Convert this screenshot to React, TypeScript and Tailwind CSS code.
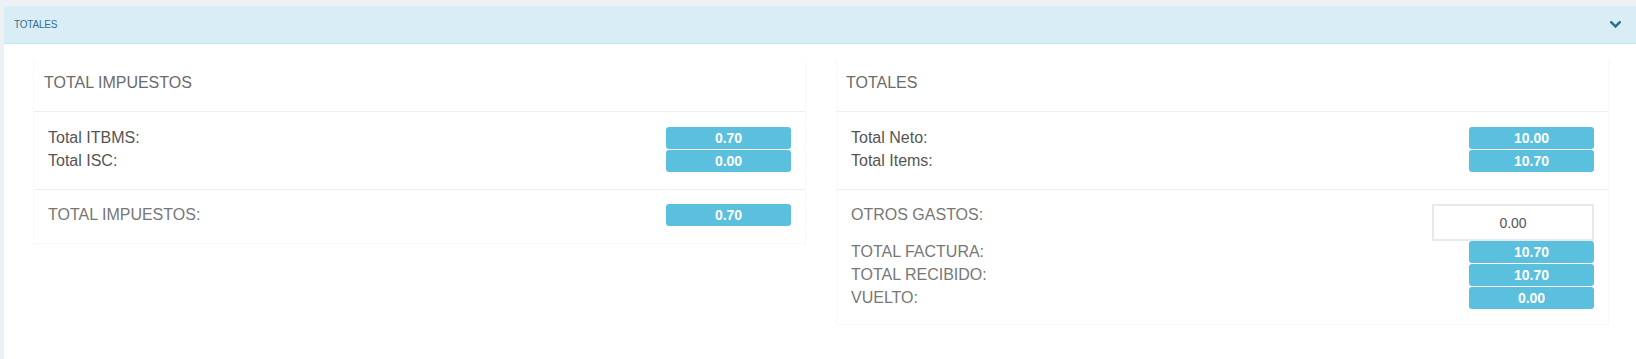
import React from 'react'

type Row = { label: string; value: string }

const impuestos: Row[] = [
  { label: 'Total ITBMS:', value: '0.70' },
  { label: 'Total ISC:', value: '0.00' },
]

const totales: Row[] = [
  { label: 'Total Neto:', value: '10.00' },
  { label: 'Total Items:', value: '10.70' },
]

const cierre: Row[] = [
  { label: 'TOTAL FACTURA:', value: '10.70' },
  { label: 'TOTAL RECIBIDO:', value: '10.70' },
  { label: 'VUELTO:', value: '0.00' },
]

function Badge({ value }: { value: string }) {
  return (
    <span className="w-[125px] h-[22px] rounded-[3px] bg-[#5bc0de] text-white text-[14px] font-bold leading-[22px] text-center">
      {value}
    </span>
  )
}

function ValueRow({ label, value, color = 'text-[#555]' }: Row & { color?: string }) {
  return (
    <div className="flex items-start justify-between h-[23px]">
      <span className={`text-[16px] leading-[22px] ${color}`}>{label}</span>
      <Badge value={value} />
    </div>
  )
}

function CardHeading({ title, pl }: { title: string; pl: string }) {
  return (
    <div className={`h-[51px] border-b border-[#eeeeee] pt-[11px] ${pl} text-[16px] leading-[22px] text-[#6b6b6b]`}>
      {title}
    </div>
  )
}

function Chevron() {
  return (
    <svg width="11" height="8" viewBox="0 0 11 8" className="block">
      <path d="M1.3 1.3 L5.5 5.5 L9.7 1.3" fill="none" stroke="#31708f" strokeWidth="2.6" strokeLinecap="square" />
    </svg>
  )
}

export default function App() {
  return (
    <div className="min-h-screen bg-[#eef1f3] pt-[6px] pl-[4px]" style={{ fontFamily: '"Liberation Sans", Arial, sans-serif' }}>
      <div className="bg-white min-h-[353px]">
        <div className="h-[38px] bg-[#d9edf7] border-b border-[#bce8f1] flex items-center justify-between pl-[10px] pr-[15px]">
          <span className="text-[10px] text-[#31708f] tracking-[-0.2px]">TOTALES</span>
          <Chevron />
        </div>

        <div className="grid grid-cols-2 gap-[30px] pl-[29px] pr-[27px] pt-[17px]">
          {/* impuestos */}
          <div className="self-start border-x border-b border-[#f8f8f8]">
            <CardHeading title="TOTAL IMPUESTOS" pl="pl-[10px]" />
            <div className="pt-[15px] pb-[16px] pl-[14px] pr-[14px] border-b border-[#eeeeee]">
              {impuestos.map((r) => (
                <ValueRow key={r.label} {...r} />
              ))}
            </div>
            <div className="pt-[14px] pb-[16px] pl-[14px] pr-[14px]">
              <ValueRow label="TOTAL IMPUESTOS:" value="0.70" color="text-[#777]" />
            </div>
          </div>

          {/* totales */}
          <div className="self-start border-x border-b border-[#f8f8f8]">
            <CardHeading title="TOTALES" pl="pl-[9px]" />
            <div className="pt-[15px] pb-[16px] pl-[14px] pr-[14px] border-b border-[#eeeeee]">
              {totales.map((r) => (
                <ValueRow key={r.label} {...r} />
              ))}
            </div>
            <div className="pt-[14px] pb-[14px] pl-[14px] pr-[14px]">
              <div className="flex items-start justify-between h-[37px]">
                <span className="text-[16px] leading-[22px] text-[#777]">OTROS GASTOS:</span>
                <input
                  readOnly
                  value="0.00"
                  className="w-[162px] h-[37px] border-2 border-[#e6e9ed] bg-white text-center text-[14px] text-[#555] outline-none"
                />
              </div>
              {cierre.map((r) => (
                <ValueRow key={r.label} {...r} color="text-[#777]" />
              ))}
            </div>
          </div>
        </div>
      </div>
    </div>
  )
}
